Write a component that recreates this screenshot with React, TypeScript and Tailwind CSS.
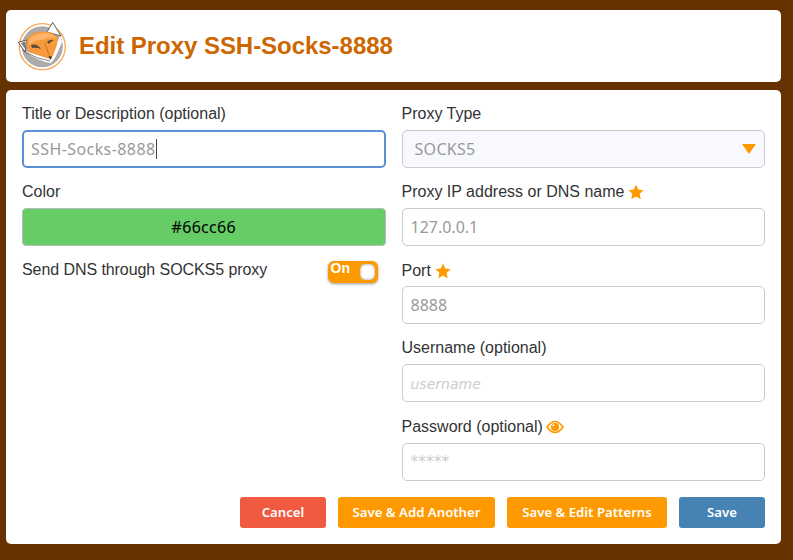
const labelClass = "block h-[22px] leading-[24px] text-[16px] text-[#333]";
const starLabelClass = "flex items-center h-[22px] pt-[2px] text-[16px] text-[#333]";
const inputClass = "block w-full h-[38px] rounded-[5px] border border-[#ccc] bg-white px-2 outline-none";

function FoxLogo() {
  return (
    <svg width="50" height="50" viewBox="0 0 50 50" className="shrink-0">
      <circle cx="25.3" cy="25.7" r="23" fill="#fff" stroke="#f9a654" strokeWidth="1.3" />
      <circle cx="25.3" cy="25.7" r="20.5" fill="#ababab" />
      {/* white ruff under the face */}
      <path d="M8 30 Q20 40 34 42 L38 37 L45 21 L43 15 L36 30 L33 38 Z" fill="#fff" />
      <path d="M8 31 Q20 38 33 40" stroke="#666" strokeWidth="0.8" fill="none" />
      {/* ears */}
      <path d="M30 11 L35.7 1.3 L44 15 Z" fill="#fff" stroke="#555" strokeWidth="0.9" />
      <path d="M9.7 19 L1.3 21.3 L8 31 Z" fill="#fff" stroke="#444" strokeWidth="0.9" />
      <path d="M8.5 20.5 L4 22 L8.3 28 Z" fill="#777" />
      {/* face */}
      <path d="M9.7 18 Q14 12 21.3 10.7 L30.3 10.7 Q37 12 41.3 16.7 Q40 26 36.3 34 L33.7 38 L23 34.7 L11.3 30.7 Q8.5 24 9.7 18 Z" fill="#f79a3c" />
      <path d="M12 18 Q20 11 30 12 Q36 13 39 17 Q30 16 26 19 Q20 18 12 24 Z" fill="#fbb469" />
      <path d="M14 24 Q20 22 24 28 Q19 26 15 27 Z" fill="#5a4a3a" />
      <path d="M30 21 Q33 18 37 19 Q34 20 32 23 Z" fill="#5a4a3a" />
      <path d="M28 22 L33 37" stroke="#b8691f" strokeWidth="0.7" fill="none" />
      <path d="M31.5 35 L35 35.5 L33.7 39 Z" fill="#333" />
    </svg>
  );
}

function StarIcon() {
  return (
    <svg width="16" height="16" viewBox="0 0 24 24" className="shrink-0 -mt-[1px] ml-[4px]">
      <path
        d="M12 1 L15.4 8.3 L23.4 9.3 L17.5 14.8 L19.1 22.7 L12 18.8 L4.9 22.7 L6.5 14.8 L0.6 9.3 L8.6 8.3 Z"
        fill="#ff9900"
      />
    </svg>
  );
}

function EyeIcon() {
  return (
    <svg width="18" height="14" viewBox="0 0 18 14" className="shrink-0 ml-[3px]">
      <path d="M1 7 Q5 1.5 9 1.5 Q13 1.5 17 7 Q13 12.5 9 12.5 Q5 12.5 1 7 Z" fill="none" stroke="#ff9900" strokeWidth="1.7" />
      <circle cx="9" cy="7" r="4" fill="#ff9900" />
      <circle cx="7.4" cy="5.2" r="1" fill="#fff" />
    </svg>
  );
}

function ActionButton({ label, color, width }: { label: string; color: string; width: string }) {
  return (
    <button
      className={`h-[31px] pt-[1px] rounded-[3px] text-white text-[13.2px] font-semibold font-['Noto_Sans',sans-serif] ${color} ${width}`}
    >
      {label}
    </button>
  );
}

export default function App() {
  return (
    <div className="w-[793px] h-[560px] bg-[#663300] pt-[10px] pl-[6px] pr-[12px] font-['Liberation_Sans',sans-serif] overflow-hidden">
      {/* Header */}
      <div className="h-[72px] bg-white rounded-[5px] flex items-center pl-[11px] gap-[11px] mb-2">
        <FoxLogo />
        <h1 className="text-[24px] font-bold tracking-[-0.04px] text-[#cc6600] ml-[1px]">Edit Proxy SSH-Socks-8888</h1>
      </div>

      {/* Form */}
      <div className="h-[454px] bg-white rounded-[5px] pt-[12px] px-4">
        <div className="grid grid-cols-2 gap-x-4">
          <div>
            <label className={`${labelClass} mb-[6px]`}>Title or Description (optional)</label>
            <div className="flex items-center w-full h-[38px] rounded-[5px] border-2 border-[#5b8fd6] bg-white px-[7px] text-[16px] tracking-[0.42px] text-[#999] font-['Noto_Sans',sans-serif]">
              SSH-Socks-8888
              <span className="w-px h-[20px] bg-[#444]" />
            </div>

            <label className={`${labelClass} mt-[12px] mb-[6px]`}>Color</label>
            <div className="flex items-center justify-center w-full h-[38px] rounded-[4px] border border-[#bbb] bg-[#66cc66] text-[16px] tracking-[0.3px] text-black font-['Noto_Sans',sans-serif]">
              #66cc66
            </div>

            <div className="flex items-start justify-between mt-[13px] pr-2">
              <span className="text-[16px] leading-[22px] tracking-[-0.07px] text-[#333]">Send DNS through SOCKS5 proxy</span>
              <div className="relative w-[50px] h-[22px] mt-[2px] rounded-[6px] bg-[#ff9900] shadow-[0_1px_3px_rgba(0,0,0,0.4)]">
                <span className="absolute left-[3px] -top-[1px] text-[14px] leading-[16px] font-bold text-white">On</span>
                <span className="absolute right-[3px] top-[3px] w-[15px] h-[16px] rounded-[5px] bg-white shadow-[inset_0_0_3px_rgba(0,0,0,0.45)]" />
              </div>
            </div>
          </div>

          <div>
            <label className={`${labelClass} mb-[6px]`}>Proxy Type</label>
            <div className="relative flex items-center w-full h-[38px] rounded-[5px] border border-[#ccc] bg-[#f8f9ff] pl-3 text-[16px] tracking-[0.3px] text-[#999] font-['Noto_Sans',sans-serif]">
              SOCKS5
              <span className="absolute right-[8px] top-[13px] w-0 h-0 border-l-[7px] border-r-[7px] border-t-[10px] border-l-transparent border-r-transparent border-t-[#ff9900]" />
            </div>

            <label className={`${starLabelClass} mt-[12px] mb-[6px]`}>
              Proxy IP address or DNS name
              <StarIcon />
            </label>
            <input className={`${inputClass} text-[16px] font-['Noto_Sans',sans-serif] placeholder:text-[#999]`} placeholder="127.0.0.1" readOnly />

            <label className={`${starLabelClass} mt-[13px] mb-[5px]`}>
              Port
              <StarIcon />
            </label>
            <input className={`${inputClass} text-[16px] font-['Noto_Sans',sans-serif] placeholder:text-[#999]`} placeholder="8888" readOnly />

            <label className={`${labelClass} mt-[12px] mb-[6px]`}>Username (optional)</label>
            <input className={`${inputClass} pt-[2px] italic text-[14px] font-['DejaVu_Sans',sans-serif] placeholder:text-[#ccc]`} placeholder="username" readOnly />

            <label className={`${starLabelClass} mt-[13px] mb-[6px]`}>
              Password (optional)
              <EyeIcon />
            </label>
            <input className={`${inputClass} italic text-[15.5px] font-['DejaVu_Sans',sans-serif] placeholder:text-[#ccc]`} placeholder="*****" readOnly />
          </div>
        </div>

        <div className="flex justify-end gap-3 mt-4">
          <ActionButton label="Cancel" color="bg-[#f05a40]" width="w-[86px]" />
          <ActionButton label="Save & Add Another" color="bg-[#ff9900]" width="w-[157px]" />
          <ActionButton label="Save & Edit Patterns" color="bg-[#ff9900]" width="w-[160px]" />
          <ActionButton label="Save" color="bg-[#4682b4]" width="w-[86px]" />
        </div>
      </div>
    </div>
  );
}
